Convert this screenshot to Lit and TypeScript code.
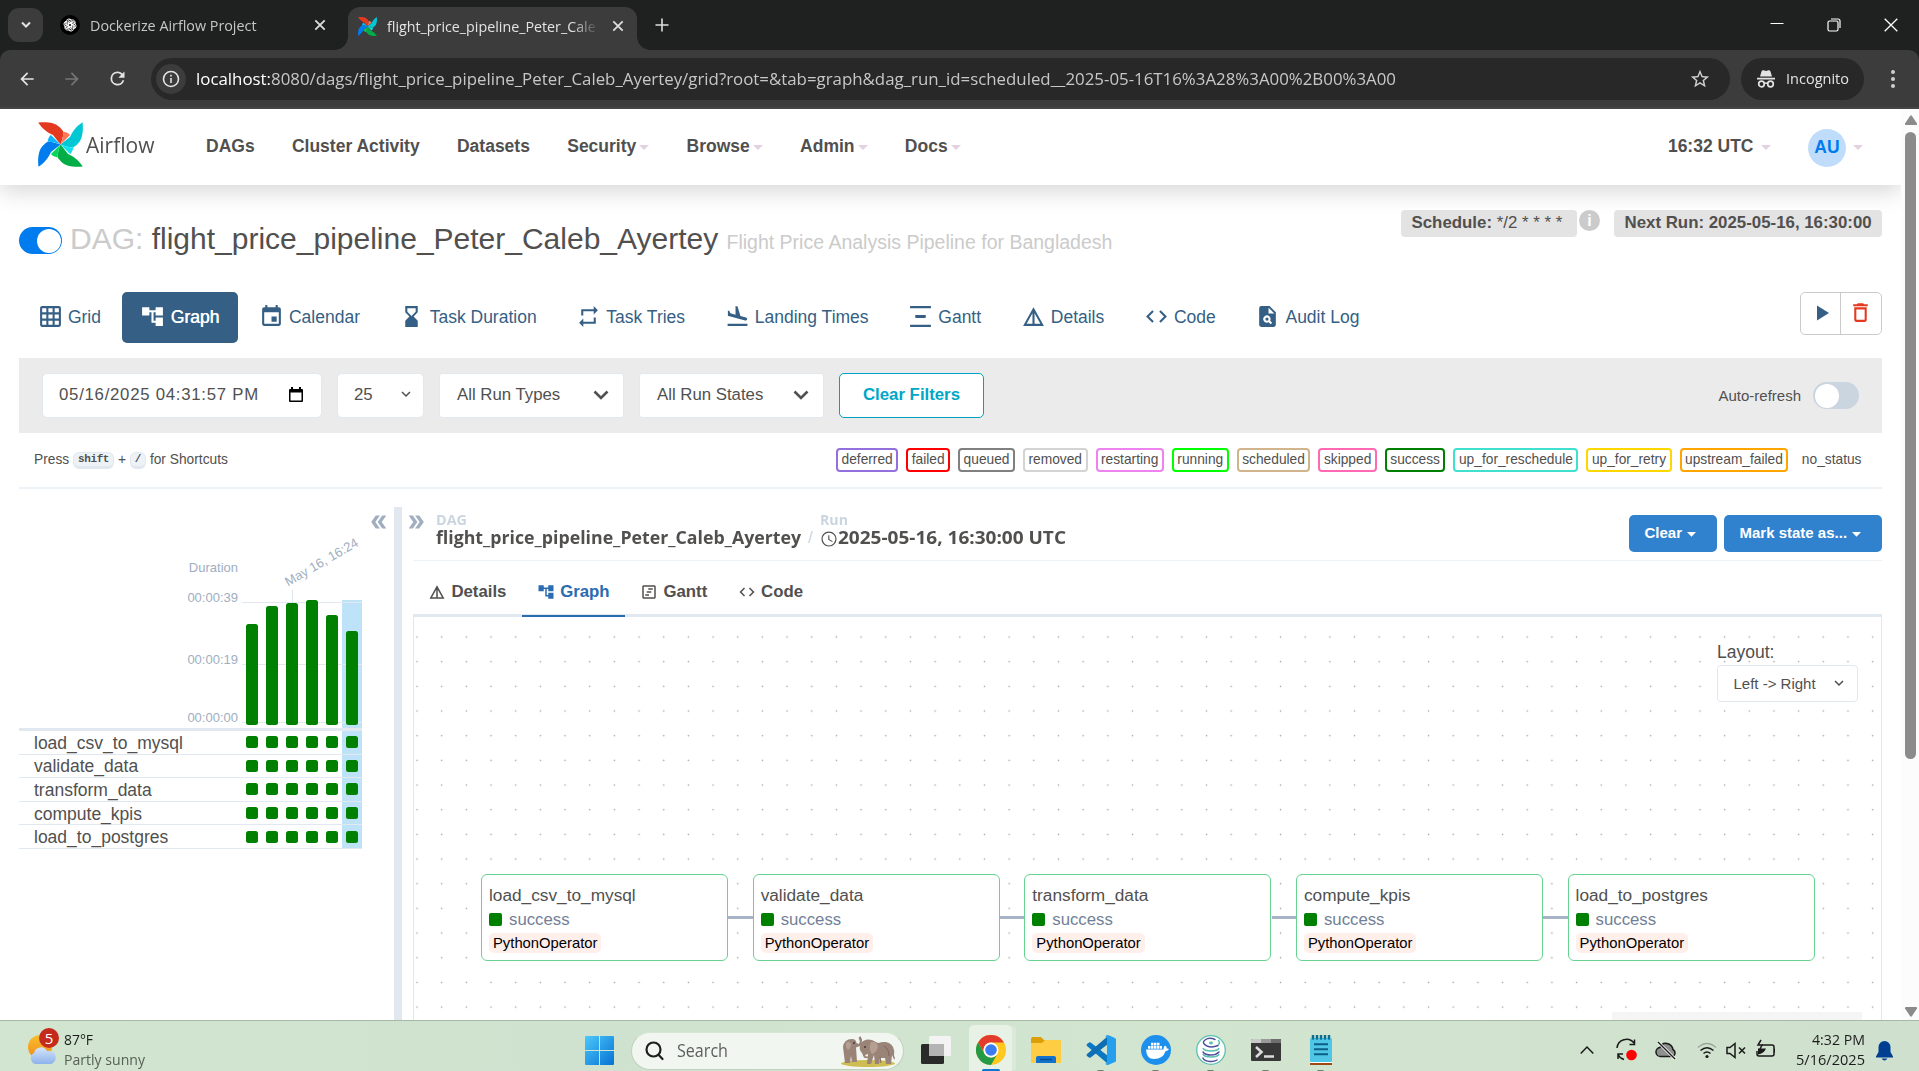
import { LitElement, html, css, svg, nothing } from "lit";
import { customElement, property } from "lit/decorators.js";

const P = {
  grid: "M20 2H4c-1.1 0-2 .9-2 2v16c0 1.1.9 2 2 2h16c1.1 0 2-.9 2-2V4c0-1.1-.9-2-2-2zM8 20H4v-4h4v4zm0-6H4v-4h4v4zm0-6H4V4h4v4zm6 12h-4v-4h4v4zm0-6h-4v-4h4v4zm0-6h-4V4h4v4zm6 12h-4v-4h4v4zm0-6h-4v-4h4v4zm0-6h-4V4h4v4z",
  tree: "M22 11V3h-7v3H9V3H2v8h7V8h2v10h4v3h7v-8h-7v3h-2V8h2v3z",
  event: "M17 12h-5v5h5v-5zM16 1v2H8V1H6v2H5c-1.11 0-1.99.9-1.99 2L3 19c0 1.1.89 2 2 2h14c1.1 0 2-.9 2-2V5c0-1.1-.9-2-2-2h-1V1h-2zm3 18H5V8h14v11z",
  hourglass: "M18 22l-.01-6L14 12l3.99-4.01L18 2H6v6l4 4-4 3.99V22h12zM8 7.5V4h8v3.5l-4 4-4-4z",
  repeat: "M7 7h10v3l4-4-4-4v3H5v6h2V7zm10 10H7v-3l-4 4 4 4v-3h12v-6h-2v4z",
  landing: "M2.5 19h19v2h-19zm7.18-5.73l4.35 1.16 5.31 1.42c.8.21 1.62-.26 1.84-1.06.21-.8-.26-1.62-1.06-1.84l-5.31-1.42-2.76-9.02L10.12 2v8.28L5.15 8.95l-.93-2.32-1.45-.39v5.17l1.6.43 5.31 1.43z",
  gantt: "M22 2v2H2V2h20zM7 10.5v3h10v-3H7zM2 20v2h20v-2H2z",
  details: "M12 3L2 21h20L12 3zm1 5.92L18.6 19H13V8.92zm-2 0V19H5.4L11 8.92z",
  code: "M9.4 16.6L4.8 12l4.6-4.6L8 6l-6 6 6 6 1.4-1.4zm5.2 0l4.6-4.6-4.6-4.6L16 6l6 6-6 6-1.4-1.4z",
  audit: "M14 2H6a2 2 0 0 0-2 2v16a2 2 0 0 0 2 2h12a2 2 0 0 0 2-2V8zm1.04 17.45-1.88-1.88c-1.33.71-3.01.53-4.13-.59a3.495 3.495 0 0 1 0-4.95 3.495 3.495 0 0 1 4.95 0c1.12 1.12 1.31 2.8.59 4.13l1.88 1.88zM13 9V3.5L18.5 9zM11.5 13a1.5 1.5 0 1 0 0 3a1.5 1.5 0 1 0 0-3z",
  trash: "M6 19c0 1.1.9 2 2 2h8c1.1 0 2-.9 2-2V7H6v12zM8 9h8v10H8V9zm7.5-5l-1-1h-5l-1 1H5v2h14V4h-3.5z",
  play: "M7 4.5v15l12-7.5z",
  dbl: "M15.5 5H11l5 7-5 7h4.5l5-7zM8.500 5H4l5 7-5 7h4.500l5-7z",
  ganttBox: "M19 3H5c-1.1 0-2 .9-2 2v14c0 1.1.9 2 2 2h14c1.1 0 2-.9 2-2V5c0-1.1-.9-2-2-2zm0 16H5V5h14v14zM11 7h6v2h-6zM9 11h6v2H9zM7 15h5v2H7z",
  clock: "M11.99 2C6.47 2 2 6.48 2 12s4.470 10 9.990 10C17.520 22 22 17.520 22 12S17.520 2 11.990 2zM12 20.500a8.500 8.500 0 1 1 0-17a8.500 8.500 0 0 1 0 17zM12.500 7H11v6l5.200 3.100.750-1.230-4.450-2.640z",
  star: "M22 9.24l-7.190-.620L12 2 9.190 8.630 2 9.240l5.460 4.730L5.820 21 12 17.270 18.180 21l-1.630-7.030L22 9.240zM12 15.400l-3.760 2.270 1-4.280-3.320-2.880 4.380-.380L12 6.100l1.710 4.040 4.380.380-3.320 2.880 1 4.280L12 15.400z",
  back: "M20 11H7.830l5.590-5.590L12 4l-8 8 8 8 1.410-1.410L7.830 13H20v-2z",
  fwd: "M12 4l-1.410 1.410L16.170 11H4v2h12.170l-5.580 5.590L12 20l8-8z",
  reload: "M17.650 6.350A7.958 7.958 0 0 0 12 4a8 8 0 1 0 7.730 10h-2.080A6 6 0 1 1 12 6c1.660 0 3.140.690 4.220 1.780L13 11h7V4l-2.350 2.350z",
};

const icon = (d: string, size: number, cls = "") => html`<svg class="ic ${cls}" width=${size} height=${size} viewBox="0 0 24 24" fill="currentColor"><path fill-rule="evenodd" d=${d}></path></svg>`;

const pinwheel = (size: number) => {
  const blades = [
    [0, "#e43921", "#ff7557"],
    [90, "#00c7d4", "#11e1ee"],
    [180, "#00ad46", "#04d659"],
    [270, "#017cee", "#0cb6ff"],
  ];
  return html`<svg class="ic" width=${size} height=${size} viewBox="0 0 45 45">
    ${blades.map(([a, dark, light]) => svg`<g transform="rotate(${a} 22.5 22.5)">
      <path fill=${dark} d="M.2.4C9-.4 17 .5 21.500 5C23.500 7 25 8.500 25.300 10C25.600 14 24 18 22.500 22.500L15 13C9.500 10.500 4.500 7 .2.4z"></path>
      <path fill=${light} d="M25.300 9.500C28.500 10.200 31.500 11.500 32 13L22.500 22.500C24.500 17.500 25.500 13.500 25.300 9.500z"></path></g>`)}
  </svg>`;
};

/** One line of text stretched or condensed horizontally to a given width. */
@customElement("fit-text")
export class FitText extends LitElement {
  @property({ type: Number }) w = 0;
  static styles = css`
    :host { display: inline-block; white-space: nowrap; flex: none; }
    .t { display: inline-block; transform-origin: 0 50%; }
  `;
  firstUpdated() {
    const t = this.renderRoot.querySelector<HTMLElement>(".t")!;
    const natural = t.offsetWidth || this.w;
    t.style.transform = `scaleX(${this.w / t.getBoundingClientRect().width || 1})`;
    this.style.width = `${this.w}px`;
    t.style.marginRight = `${this.w - natural}px`;
  }
  render() {
    return html`<span class="t"><slot></slot></span>`;
  }
}

@customElement("browser-chrome")
export class BrowserChrome extends LitElement {
  static styles = css`
    :host { display: block; height: 109px; background: #1f2120; color: #e3e3e3; font: 15px/20px "Open Sans", sans-serif; }
    .ic { display: block; flex: none; }
    .strip { height: 50px; display: flex; align-items: center; }
    .search { width: 35px; height: 34px; margin-left: 8px; border-radius: 11px; background: #3c3c3c; display: grid; place-items: center; }
    .tab { display: flex; align-items: center; }
    .idle { margin-left: 17px; width: 288px; color: #c7c7c7; }
    .idle fit-text { margin-left: 10px; }
    .idle .x { margin-left: 56px; }
    .active { position: relative; align-self: flex-end; height: 43px; width: 289px; background: #3c3c3c; border-radius: 12px 12px 0 0; }
    .active::before, .active::after { content: ""; position: absolute; bottom: 0; width: 13px; height: 13px; }
    .active::before { left: -13px; background: radial-gradient(circle at 0 0, transparent 12.5px, #3c3c3c 13px); }
    .active::after { right: -13px; background: radial-gradient(circle at 100% 0, transparent 12.5px, #3c3c3c 13px); }
    .active .ic:first-child { margin: -4px 0 0 9.500px; }
    .active .clip, .active .x { margin-top: -5px; }
    .clip { width: 210px; margin-left: 10.500px; overflow: hidden; white-space: nowrap; mask-image: linear-gradient(90deg, #000 88%, transparent 101%); }
    .active .x { margin-left: 13.500px; }
    .plus { margin-left: 18px; }
    .win { margin-left: auto; display: flex; align-items: center; gap: 43px; margin-right: 21px; }
    .bar { height: 59px; background: #3c3c3c; border-radius: 10px 10px 0 0; display: flex; align-items: center; box-sizing: border-box; border-bottom: 2px solid #474445; }
    .bar > .b1 { margin-left: 17px; } .bar > .b2 { margin-left: 25px; color: #757575; } .bar > .b3 { margin-left: 25px; }
    .omni { margin-left: 23px; width: 1579px; height: 42px; border-radius: 21px; background: #282828; display: flex; align-items: center; box-sizing: border-box; padding: 0 19px 0 5px; font-size: 17px; color: #c7c7c7; }
    .info { width: 30px; height: 30px; border-radius: 50%; background: #3c3c3c; display: grid; place-items: center; }
    .url { margin-left: 10px; }
    .url b { font-weight: 400; color: #fff; }
    .omni > .ic { margin-left: auto; color: #d0d0d0; }
    .inc { margin-left: 11px; width: 123px; height: 42px; border-radius: 21px; background: #282828; display: flex; align-items: center; box-sizing: border-box; padding-left: 15px; gap: 9.500px; }
    .inc fit-text { margin-top: -1px; }
    .dots { margin-left: 26.500px; }
  `;
  private x(c: string) {
    return html`<svg class="ic ${c}" width="14" height="14" viewBox="0 0 14 14" stroke="#dedede" stroke-width="1.800" fill="none"><path d="M2.300 2.300l9.400 9.400M11.700 2.300l-9.400 9.400"></path></svg>`;
  }
  render() {
    return html`
      <div class="strip">
        <div class="search"><svg width="12" height="8" viewBox="0 0 12 8" fill="none" stroke="#e3e3e3" stroke-width="2"><path d="M2 1.500l4 4 4-4"></path></svg></div>
        <div class="tab idle">
          <svg class="ic" width="20" height="20" viewBox="0 0 20 20"><circle cx="10" cy="10" r="10" fill="#000"></circle>
            <g fill="none" stroke="#fff" stroke-width=".9">${[0, 60, 120, 180, 240, 300].map((a) => svg`<path transform="rotate(${a} 10 10)" d="M8 11.200V6.800a2.300 2.300 0 0 1 3.800-1.700L8.600 7v4.200M11.800 5.100a2.400 2.400 0 0 1 3.200 2.800"></path>`)}</g></svg>
          <fit-text w="166.500">Dockerize Airflow Project</fit-text>${this.x("x")}
        </div>
        <div class="tab active">${pinwheel(19)}<div class="clip"><fit-text w="274">flight_price_pipeline_Peter_Caleb_Ayertey</fit-text></div>${this.x("x")}</div>
        <svg class="ic plus" width="14" height="14" viewBox="0 0 14 14" stroke="#dedede" stroke-width="1.600"><path d="M7 .5v13M.5 7h13"></path></svg>
        <div class="win">
          <svg class="ic" width="14" height="14" viewBox="0 0 14 14" stroke="#fff"><path d="M.5 5.500h13"></path></svg>
          <svg class="ic" width="14" height="14" viewBox="0 0 14 14" stroke="#fff" fill="none" stroke-width="1.200"><rect x="1" y="3" width="10" height="10" rx="1.500"></rect><path d="M4 1h7a2 2 0 0 1 2 2v7"></path></svg>
          <svg class="ic" width="14" height="14" viewBox="0 0 14 14" stroke="#fff" stroke-width="1.300"><path d="M.7.7l12.600 12.600M13.300.7L.7 13.300"></path></svg>
        </div>
      </div>
      <div class="bar">
        ${icon(P.back, 20, "b1")}${icon(P.fwd, 20, "b2")}${icon(P.reload, 21, "b3")}
        <div class="omni">
          <div class="info"><svg class="ic" width="18" height="18" viewBox="0 0 18 18" fill="none" stroke="#e3e3e3" stroke-width="1.600"><circle cx="9" cy="9" r="7.500"></circle><path d="M9 8v5M9 4.800v1.700"></path></svg></div>
          <fit-text class="url" w="1200"><b>localhost:</b>8080/dags/flight_price_pipeline_Peter_Caleb_Ayertey/grid?root=&amp;tab=graph&amp;dag_run_id=scheduled__2025-05-16T16%3A28%3A00%2B00%3A00</fit-text>
          ${icon(P.star, 22)}
        </div>
        <div class="inc">
          <svg class="ic" width="20" height="20" viewBox="0 0 20 20" fill="#e3e3e3"><path d="M5.500 2.500Q6 1 7.500 1.300L10 2l2.500-.7Q14 1 14.500 2.500L16 7.500H4zM1 8.700h18v1.700H1z"></path><g fill="none" stroke="#e3e3e3" stroke-width="1.700"><circle cx="5.500" cy="15" r="2.800"></circle><circle cx="14.500" cy="15" r="2.800"></circle><path d="M8 14.500q2-1 4 0"></path></g></svg>
          <fit-text w="63">Incognito</fit-text>
        </div>
        <svg class="ic dots" width="4" height="18" viewBox="0 0 4 18" fill="#d0d0d0"><circle cx="2" cy="2" r="2"></circle><circle cx="2" cy="9" r="2"></circle><circle cx="2" cy="16" r="2"></circle></svg>
      </div>`;
  }
}

const TASKS = ["load_csv_to_mysql", "validate_data", "transform_data", "compute_kpis", "load_to_postgres"];
const BAR_TOPS = [117, 99, 96, 93, 108, 124];

@customElement("grid-panel")
export class GridPanel extends LitElement {
  static styles = css`
    :host { display: flex; width: 375px; flex: none; align-items: flex-start; font-family: "Liberation Sans", Arial, sans-serif; color: #51504f; }
    .area { width: 343px; }
    .head { display: block; border-bottom: 3px solid #e2e8f0; }
    .head text { font-size: 13px; fill: #a0aec0; }
    .row { display: flex; height: 23.600px; box-sizing: border-box; border-bottom: 1px solid #e2e8f0; align-items: center; font-size: 17.500px; line-height: 22px; }
    .name { width: 223px; padding: 1px 0 0 15px; box-sizing: border-box; }
    .cell { width: 20px; height: 100%; display: grid; place-items: center; }
    .cell:last-child { background: #bee3f8; }
    .cell i { width: 12px; height: 12px; border-radius: 2.500px; background: #008000; }
    .fold { margin: 4px 0 0 6px; color: #a0aec0; transform: scaleX(-1); display: block; }
  `;
  render() {
    return html`<div class="area">
        <svg class="head" width="343" height="221" viewBox="0 0 343 221">
          <rect x="323" y="93" width="20" height="128" fill="#bee3f8"></rect>
          <g fill="#e2e8f0"><rect x="223" y="95" width="120" height="1"></rect><rect x="223" y="157" width="120" height="1"></rect><rect x="223" y="215" width="120" height="1"></rect><rect x="273" y="83" width="1" height="13"></rect></g>
          ${BAR_TOPS.map((y, i) => svg`<rect x=${227 + i * 20} y=${y} width="12" height=${218 - y} rx="2.500" fill="#008000"></rect>`)}
          <text x="219" y="64.500" text-anchor="end">Duration</text>
          <text x="219" y="94.500" text-anchor="end">00:00:39</text>
          <text x="219" y="156.500" text-anchor="end">00:00:19</text>
          <text x="219" y="214.500" text-anchor="end">00:00:00</text>
          <text transform="translate(269 79.500) rotate(-30)">May 16, 16:24</text>
        </svg>
        ${TASKS.map((t) => html`<div class="row"><span class="name">${t}</span>${BAR_TOPS.map(() => html`<span class="cell"><i></i></span>`)}</div>`)}
      </div>
      ${icon(P.dbl, 22, "fold")}`;
  }
}

@customElement("graph-panel")
export class GraphPanel extends LitElement {
  static styles = css`
    :host { display: flex; flex-direction: column; flex: 1; min-width: 0; font-family: "Liberation Sans", Arial, sans-serif; color: #51504f; }
    .ic { display: block; flex: none; }
    .crumbs { display: flex; height: 53px; padding-left: 3px; }
    .open { color: #a0aec0; margin-top: 4px; }
    .crumb { font: 700 17px/18px "Open Sans", sans-serif; }
    .crumb small { display: block; font-size: 14px; line-height: 18px; color: #cbd5e0; margin-top: 4px; height: 18px; }
    .c1 { margin-left: 8.500px; width: 365px; }
    .slash { color: #cbd5e0; margin: 21px 7px 0 7.500px; font: 17px/20px "Liberation Sans", sans-serif; width: 5px; }
    .val { display: flex; align-items: center; height: 18px; }
    .val .ic { margin-top: 2px; }
    .btns { margin-left: auto; display: flex; gap: 7px; margin-top: 8px; height: 37px; }
    .btn { box-sizing: border-box; height: 37px; border-radius: 5px; background: #3182ce; color: #fff; font: 700 15px/36px "Liberation Sans", sans-serif; padding-left: 15.500px; display: flex; align-items: center; gap: 5px; padding-bottom: 1px; }
    .btn svg { margin-top: 3px; }
    .clear { width: 88px; } .mark { width: 158px; }
    .inner { border-top: 1px solid #edf2f7; margin-left: 11px; flex: 1; display: flex; flex-direction: column; }
    .tabs { display: flex; height: 56px; border-bottom: 3px solid #e2e8f0; font: 700 16.800px/20px "Liberation Sans", sans-serif; box-sizing: border-box; }
    .tab { display: flex; align-items: center; gap: 5px; padding: 5px 15.400px 0; height: 56px; box-sizing: border-box; }
    .tab.on { color: #2b6cb0; border-bottom: 2px solid #2b6cb0; padding-top: 7px; }
    .canvas { position: relative; flex: 1; border: solid #e2e8f0; border-width: 0 1px; overflow: hidden;
      background-image: radial-gradient(circle at 1.500px 1.500px, #a3a3a3 .6px, transparent 1.100px); background-size: 24.680px 24.680px; background-position: 1.500px 18.500px; }
    .lay { position: absolute; right: 23px; top: 25px; width: 141px; font-size: 17.500px; line-height: 21px; }
    .sel { margin-top: 2px; height: 37px; box-sizing: border-box; border: 1px solid #e2e8f0; border-radius: 4px; background: #fff; font-size: 15px; display: flex; align-items: center; padding: 0 13px 0 15.500px; justify-content: space-between; }
    .node { position: absolute; top: 257px; width: 247px; height: 87px; box-sizing: border-box; border: 1px solid #68d391; border-radius: 6px; background: #fff; padding: 10px 0 0 7px; }
    .title { font-size: 17.250px; line-height: 21px; }
    .state { display: flex; align-items: center; gap: 7px; color: #718096; font-size: 16.750px; line-height: 20px; margin-top: 4px; }
    .state i { width: 13px; height: 13px; border-radius: 2px; background: #008000; margin-top: -1px; }
    .op { display: inline-block; margin-top: 3px; background: #ffefeb; border-radius: 5px; padding: 0 4px; font-size: 14.800px; line-height: 20px; color: #000; }
    .edge { position: absolute; top: 299px; height: 3px; width: 25px; background: #a8b4c6; }
    .attr { position: absolute; right: 19px; bottom: 0; width: 250px; height: 8px; background: #f5f5f6; }
  `;
  render() {
    const caret = html`<svg class="ic" width="9" height="5" viewBox="0 0 9 5" fill="#fff"><path d="M0 0h9L4.500 4.800z"></path></svg>`;
    return html`
      <div class="crumbs">
        ${icon(P.dbl, 22, "open")}
        <div class="crumb c1"><small><fit-text w="31">DAG</fit-text></small><fit-text w="365">flight_price_pipeline_Peter_Caleb_Ayertey</fit-text></div>
        <span class="slash">/</span>
        <div class="crumb"><small><fit-text w="28">Run</fit-text></small><div class="val">${icon(P.clock, 18)}<fit-text w="228">2025-05-16, 16:30:00 UTC</fit-text></div></div>
        <div class="btns"><div class="btn clear">Clear ${caret}</div><div class="btn mark">Mark state as... ${caret}</div></div>
      </div>
      <div class="inner">
        <div class="tabs">
          <div class="tab">${icon(P.details, 18)}Details</div>
          <div class="tab on">${icon(P.tree, 18)}Graph</div>
          <div class="tab">${icon(P.ganttBox, 18)}Gantt</div>
          <div class="tab">${icon(P.code, 18)}Code</div>
        </div>
        <div class="canvas">
          ${TASKS.map((t, i) => html`${i ? html`<div class="edge" style="left:${42.5 + 271.7 * i}px"></div>` : nothing}
            <div class="node" style="left:${67 + 271.65 * i}px"><div class="title">${t}</div><div class="state"><i></i>success</div><span class="op">PythonOperator</span></div>`)}
          <div class="lay">Layout:<div class="sel">Left -&gt; Right<svg width="10" height="7" viewBox="0 0 10 7" fill="none" stroke="#51504f" stroke-width="1.500"><path d="M1 1l4 4 4-4"></path></svg></div></div>
          <div class="attr"></div>
        </div>
      </div>`;
  }
}

const LEGEND = [
  ["deferred", "mediumpurple"], ["failed", "red"], ["queued", "gray"], ["removed", "lightgrey"], ["restarting", "violet"], ["running", "lime"],
  ["scheduled", "tan"], ["skipped", "hotpink"], ["success", "green"], ["up_for_reschedule", "turquoise"], ["up_for_retry", "gold"],
  ["upstream_failed", "orange"], ["no_status", "transparent"],
];

@customElement("airflow-page")
export class AirflowPage extends LitElement {
  static styles = css`
    :host { display: flex; height: 911px; background: #fff; font: 17.500px/22px "Liberation Sans", Arial, sans-serif; color: #51504f; overflow: hidden; }
    .ic { display: block; flex: none; }
    .page { width: 1901px; display: flex; flex-direction: column; }
    .nav { height: 76px; flex: none; display: flex; align-items: center; font-weight: 700; box-shadow: 0 6px 22px rgba(0,0,0,.17); padding: 0 38px; }
    .nav > .ic { margin-top: -6px; margin-right: 3px; }
    .brand { font: 22px/30px "Open Sans", sans-serif; margin-right: 51.500px; margin-top: -6px; }
    .links { display: flex; gap: 37.300px; margin-top: -3px; }
    .drop { display: flex; align-items: center; gap: 3px; }
    .drop i, .caret { width: 0; border: 5px solid transparent; border-top-color: #e2d2e2; border-bottom: 0; margin-top: 3px; }
    .utc { margin-left: auto; display: flex; align-items: center; gap: 7.500px; margin-top: -3px; }
    .au { width: 38px; height: 38px; border-radius: 50%; background: #bfddfb; color: #017cee; display: grid; place-items: center; margin: 1px 7px 0 37px; padding-bottom: 1px; box-sizing: border-box; }
    .au + .caret { margin-top: 0; }
    .body { flex: 1; padding: 25px 19px 0; display: flex; flex-direction: column; }
    .top { display: flex; height: 82px; flex: none; align-items: flex-start; }
    .on { width: 43px; height: 27px; box-sizing: border-box; border-radius: 14px; background: #017cee; margin: 17px 8px 0 0; padding: 1.500px; display: flex; justify-content: flex-end; }
    .on i { width: 24px; height: 24px; border-radius: 50%; background: #fff; }
    .h { font-size: 30px; line-height: 57px; white-space: nowrap; }
    .mute { color: #cbcbcb; } .sub { font-size: 19.500px; color: #cbcbcb; }
    .tag { height: 27px; background: #e3e3e3; border-radius: 4px; font: 700 16.850px/26px "Liberation Sans", sans-serif; box-sizing: border-box; padding: 0 10.500px; white-space: nowrap; }
    .tag span { font-weight: 400; }
    .t1 { margin-left: auto; width: 176px; } .t2 { width: 268px; margin-left: 14px; }
    .i { width: 21px; height: 21px; border-radius: 50%; background: #cbcbcb; color: #fff; font: 700 16px/21px "Liberation Sans", sans-serif; text-align: center; margin-left: 2px; }
    .views { display: flex; gap: 2.050px; height: 66px; flex: none; color: #355f84; }
    .v { height: 51px; display: flex; align-items: center; gap: 5.200px; padding: 0 18.720px; border-radius: 5px; }
    .v .ic { margin-top: -2.500px; }
    .v span { margin-top: -2px; }
    .v.sel { background: #355f84; color: #fff; text-shadow: .4px 0 #fff; }
    .acts { margin-left: auto; height: 43px; width: 82px; box-sizing: border-box; border: 1px solid #cbcbcb; border-radius: 5px; display: grid; grid-template-columns: 39px 1fr; }
    .acts span { display: grid; place-items: center; padding: 0 0 2px 3px; }
    .acts span + span { border-left: 1px solid #cbcbcb; color: #e43921; padding: 0 1px 3px 0; }
    .filters { height: 75px; flex: none; background: #ebebeb; display: flex; align-items: center; box-sizing: border-box; padding: 0 23px 0 23px; font-size: 16.800px; }
    .f { height: 45px; background: #fff; border: 1px solid #e2e8f0; border-radius: 5px; box-sizing: border-box; display: flex; align-items: center; justify-content: space-between; margin-right: 15px; padding: 0 14px 2px 17px; }
    .date { width: 280px; padding: 0 18.500px 2px 16px; letter-spacing: .730px; }
    .n { width: 87px; padding: 0 12.500px 2px 16px; } .s { width: 185px; border-radius: 3px; }
    .clr { width: 145px; border-color: #00a2c2; color: #00a7c7; font-weight: 700; justify-content: center; margin: 0; padding: 0 0 2px; }
    .auto { margin-left: auto; font-size: 15px; }
    .sw { width: 46px; height: 27px; border-radius: 14px; background: #cbd5e0; box-sizing: border-box; padding: 1.500px; margin-left: 12px; }
    .sw i { display: block; width: 24px; height: 24px; border-radius: 50%; background: #fff; }
    .keys { height: 56px; flex: none; box-sizing: border-box; border-bottom: 2px solid #edf2f7; display: flex; align-items: center; font-size: 13.750px; padding: 0 15px; gap: 3.700px; }
    kbd { background: #edf2f7; border: 1px solid #e2e8f0; border-bottom-width: 3px; border-radius: 6px; font: 700 11px/12px "Liberation Mono", monospace; height: 17px; box-sizing: border-box; padding: 0 4.200px; letter-spacing: -.4px; margin-top: 0; }
    .legend { margin-left: auto; display: flex; gap: 8px; }
    .legend span { height: 24px; box-sizing: border-box; border: 2px solid; border-radius: 4px; padding: 0 3.500px; line-height: 19px; font-size: 13.750px; }
    .main { flex: 1; display: flex; margin-top: 18px; min-height: 0; }
    .split { width: 8px; background: #e2e8f0; flex: none; }
    .scroll { width: 18px; background: #fcfcfc; display: flex; flex-direction: column; align-items: center; padding: 6px 0 3px 1px; box-sizing: border-box; }
    .thumb { width: 11px; height: 627px; border-radius: 6px; background: #8b8b8b; margin: 7px 0 auto; }
  `;
  private drop(t: string) {
    return html`<span class="drop">${t}<i></i></span>`;
  }
  private chev() {
    return html`<svg width="16" height="10" viewBox="0 0 16 10" fill="none" stroke="#51504f" stroke-width="2.600"><path d="M1.500 1.500L8 8l6.500-6.500"></path></svg>`;
  }
  render() {
    return html`<div class="page">
        <div class="nav">${pinwheel(45)}<fit-text class="brand" w="68.500">Airflow</fit-text>
          <div class="links"><span>DAGs</span><span>Cluster Activity</span><span>Datasets</span>${["Security", "Browse", "Admin", "Docs"].map((t) => this.drop(t))}</div>
          <div class="utc">16:32 UTC<i class="caret"></i></div><div class="au">AU</div><i class="caret"></i>
        </div>
        <div class="body">
          <div class="top">
            <div class="on"><i></i></div>
            <div class="h"><span class="mute">DAG:</span> flight_price_pipeline_Peter_Caleb_Ayertey <span class="sub">Flight Price Analysis Pipeline for Bangladesh</span></div>
            <div class="tag t1">Schedule: <span>*/2 * * * *</span></div><div class="i">i</div><div class="tag t2">Next Run: 2025-05-16, 16:30:00</div>
          </div>
          <div class="views">
            ${[["grid", "Grid"], ["tree", "Graph"], ["event", "Calendar"], ["hourglass", "Task Duration"], ["repeat", "Task Tries"], ["landing", "Landing Times"], ["gantt", "Gantt"], ["details", "Details"], ["code", "Code"], ["audit", "Audit Log"]].map(
              ([k, t]) => html`<div class="v ${t === "Graph" ? "sel" : ""}">${icon(P[k as keyof typeof P], 25)}<span>${t}</span></div>`)}
            <div class="acts"><span>${icon(P.play, 24)}</span><span>${icon(P.trash, 25)}</span></div>
          </div>
          <div class="filters">
            <div class="f date">05/16/2025 04:31:57 PM<svg width="14" height="15" viewBox="0 0 14 15"><path fill="#000" fill-rule="evenodd" d="M2 0h2v2h6V0h2v2h1a1 1 0 0 1 1 1v11a1 1 0 0 1-1 1H1a1 1 0 0 1-1-1V3a1 1 0 0 1 1-1h1zM1.500 5.500v8h11v-8z"></path></svg></div>
            <div class="f n">25<svg width="10" height="7" viewBox="0 0 10 7" fill="none" stroke="#51504f" stroke-width="1.500"><path d="M1 1l4 4 4-4"></path></svg></div>
            <div class="f s">All Run Types${this.chev()}</div><div class="f s">All Run States${this.chev()}</div>
            <div class="f clr">Clear Filters</div>
            <span class="auto">Auto-refresh</span><div class="sw"><i></i></div>
          </div>
          <div class="keys"><span>Press</span><kbd>shift</kbd><span>+</span><kbd>/</kbd><span>for Shortcuts</span>
            <div class="legend">${LEGEND.map(([t, c]) => html`<span style="border-color:${c}">${t}</span>`)}</div></div>
          <div class="main"><grid-panel></grid-panel><div class="split"></div><graph-panel></graph-panel></div>
        </div>
      </div>
      <div class="scroll">
        <svg class="ic" width="12" height="10" viewBox="0 0 12 10" fill="#8b8b8b"><path d="M5 1q1-1.300 2 0l5 7.500q.3 1.500-1 1.500H1Q-.3 10 0 8.500z"></path></svg>
        <div class="thumb"></div>
        <svg class="ic" width="12" height="10" viewBox="0 0 12 10" fill="#8b8b8b"><path d="M5 9q1 1.300 2 0l5-7.500Q12.300 0 11 0H1Q-.3 0 0 1.500z"></path></svg>
      </div>`;
  }
}

@customElement("task-bar")
export class TaskBar extends LitElement {
  static styles = css`
    :host { display: flex; align-items: center; height: 51px; box-sizing: border-box; border-top: 1px solid #a8b8a7; background: linear-gradient(90deg, #d2e5d0, #cfe2cf 30%, #d2e5cf 60%, #cfe1ce); font: 15px/20px "Open Sans", sans-serif; color: #1c1c1c; }
    svg { display: block; flex: none; }
    .wx { margin-left: 26px; } .wt { margin-left: 5px; width: 82px; margin-top: 5px; } .wt fit-text { display: block; } .wt .m { color: #575f57; }
    .win { margin-left: 439px; margin-top: 8px; }
    .pill { margin: 9px 0 0 17px; width: 273px; height: 38px; box-sizing: border-box; border-radius: 19px; background: #f1f6f0; border: 1px solid #bfd0bd; border-top-color: #d7e5d5; display: flex; align-items: center; padding: 0 7px 0 13px; font-size: 17.500px; color: #5c5f5c; }
    .pill fit-text { margin: -1px 0 0 13px; } .pill svg:last-child { margin-left: auto; }
    .apps { display: flex; margin-top: 10px; margin-left: 16.500px; gap: 25px; align-items: center; }
    .app { width: 30px; height: 40px; display: flex; flex-direction: column; align-items: center; padding-top: 4px; box-sizing: border-box; }
    .app::after { content: ""; flex: none; width: 7px; height: 3px; border-radius: 2px; background: #718070; margin-top: 5px; }
    .app.no::after { background: none; }
    .app.chrome { width: 43px; height: 46px; margin: -6px -6.500px 0 -6.500px; border-radius: 5px 5px 0 0; background: #e7f1e6; box-shadow: 5px 0 0 -1px #dbe9da; padding-top: 10px; }
    .app.chrome::after { width: 18px; background: #0c78d4; margin-top: 4px; }
    .tray { margin-left: auto; display: flex; align-items: center; margin-right: 26px; margin-top: 8px; }
    .time { display: flex; flex-direction: column; align-items: flex-end; width: 70px; margin: -3px 11px 0 20px; }
    .bell { margin-top: 1px; }
  `;
  render() {
    return html`
      <svg class="wx" width="33" height="40" viewBox="0 0 33 40"><defs><linearGradient id="s" x1="0" y1="0" x2="0" y2="1"><stop offset="0" stop-color="#f9c02d"></stop><stop offset="1" stop-color="#f08a1c"></stop></linearGradient><linearGradient id="c" x1="0" y1="0" x2="0" y2="1"><stop offset="0" stop-color="#d5e5fb"></stop><stop offset="1" stop-color="#8db2ea"></stop></linearGradient></defs>
        <circle cx="14" cy="21" r="12" fill="url(#s)"></circle><path fill="url(#c)" d="M9 38a6 6 0 0 1-1-11 7 7 0 0 1 13-2 6.500 6.500 0 0 1 4 13z"></path><circle cx="23" cy="12" r="10" fill="#c42b1c"></circle><text x="23" y="17.500" font-size="15" text-anchor="middle" fill="#fff" font-family="Open Sans, sans-serif">5</text></svg>
      <div class="wt"><fit-text w="29">87°F</fit-text><fit-text class="m" w="81">Partly sunny</fit-text></div>
      <svg class="win" width="29" height="29" viewBox="0 0 29 29"><defs><linearGradient id="w" x1="0" y1="0" x2="1" y2="1"><stop offset="0" stop-color="#4cc8fc"></stop><stop offset="1" stop-color="#0672d3"></stop></linearGradient></defs><path fill="url(#w)" d="M0 1q0-1 1-1h13v14H0zM15 0h13q1 0 1 1v13H15zM0 15h14v14H1q-1 0-1-1zM15 15h14v13q0 1-1 1H15z"></path></svg>
      <div class="pill">
        <svg width="19" height="20" viewBox="0 0 19 20" fill="none" stroke="#1f1f1f" stroke-width="2.200" stroke-linecap="round"><circle cx="8.500" cy="8.500" r="7"></circle><path d="M13.500 13.800l4 4.200"></path></svg>
        <fit-text w="51">Search</fit-text>
        <svg width="56" height="32" viewBox="0 0 56 32"><ellipse cx="28" cy="28.500" rx="27" ry="3.500" fill="#cdbd52"></ellipse>
          <g fill="#9a8377"><path d="M3 12Q4 4 12 4q4 0 4.500 4l2 1Q21 7 18.500 3l1.700-2Q24 6 20 11l-4 1.500L17 27h-5l-1-6-1 7H5z"></path><path d="M22 18Q18 14 21 8 25 3 32 5l6 3q11-3 15 4 2 4 1 8l1 4-1 .5L52 20l-1 9h-5l-1-6h-5l-1 6h-4l-1-9-3 9h-4l1-10q-2 0-3 1.500 1 1.500 2 .5l1 1.500q-4 2-5-2z"></path></g>
          <path d="M31 7q6-1 7 5-2 6-6 7-4-5-1-12z" fill="#b59f92"></path><path d="M6 8q3-3 5 1 0 4-3 6-3-3-2-7z" fill="#b59f92"></path><path d="M13 8h2M24 12h2" stroke="#473a35" stroke-width="1.500"></path><path d="M44 11q5 3 5 10M40 22l1 6" stroke="#7d675c" fill="none"></path></svg>
      </div>
      <div class="apps">
        <div class="app no"><svg width="30" height="30" viewBox="0 0 30 30"><rect x="0" y="9" width="23" height="20" rx="1.500" fill="#2a2a2a"></rect><rect x="8" y="1" width="22" height="20" rx="1.500" fill="#f3f3f3"></rect><path d="M8 9h15v12H9.500Q8 21 8 19.500z" fill="#b4b4b4"></path></svg></div>
        <div class="app chrome"><svg width="30" height="30" viewBox="0 0 30 30"><circle cx="15" cy="15" r="15" fill="#ffc81f"></circle><path d="M2 7.500A15 15 0 0 1 28 7.500H15a7.500 7.500 0 0 0-6.500 11.250z" fill="#e33b2e"></path><path d="M2 7.500a15 15 0 0 0 13 22.500l6.500-11.250a7.500 7.500 0 0 1-13 0z" fill="#249a46"></path><circle cx="15" cy="15" r="7.500" fill="#fff"></circle><circle cx="15" cy="15" r="5.800" fill="#3b7df0"></circle></svg></div>
        <div class="app no"><svg width="30" height="30" viewBox="0 0 30 30"><path d="M0 4q0-2 2-2h8l3 3h15q2 0 2 2v4H0z" fill="#dd9f08"></path><path d="M0 8h11l3-3h15q1 0 1 1v21q0 1-1 1H1q-1 0-1-1z" fill="#ffcd43"></path><path d="M5 28v-5q0-2 2-2h16q2 0 2 2v5z" fill="#1273ce"></path><path d="M9 24.500h12" stroke="#0a4c90" stroke-width="1.500"></path></svg></div>
        <div class="app"><svg width="30" height="30" viewBox="0 0 30 30"><path d="M1 9l2-1.500q1-.5 2 .3L22 21v8L1 11q-1-1 0-2z" fill="#0a78c2"></path><path d="M1 21l2 1.500q1 .5 2-.3L22 9V1L1 19q-1 1 0 2z" fill="#0e6fb5"></path><path d="M22 0l7 3q1 .5 1 1.500v21q0 1-1 1.500l-7 3q-2 0-3-1.500 2 .5 2-1.500V3q0-2-2-1.500Q20 0 22 0z" fill="#26a0ee"></path></svg></div>
        <div class="app"><svg width="30" height="30" viewBox="0 0 30 30"><circle cx="15" cy="15" r="15" fill="#1d8fed"></circle><path d="M5 14.500h17.500q0-3 1.500-4 2 1 1.800 3 1.500-.3 2.200.5-1 2-3.500 2.200Q22 24 13 24q-7.500 0-8-9.500z" fill="#fff"></path><path d="M7 11h2.500v2.700H7zM10 11h2.500v2.700H10zM13 11h2.500v2.700H13zM16 11h2.500v2.700H16zM19 11h2v2.700h-2zM10 7.800h2.500v2.700H10zM13 7.800h2.500v2.700H13zM16 7.800h2.500v2.700H16z" fill="#fff"></path></svg></div>
        <div class="app"><svg width="30" height="30" viewBox="0 0 30 30" fill="none"><circle cx="15" cy="15" r="14.300" fill="#fff" stroke="#5bc0b0" stroke-width="1.300"></circle><g stroke="#4f4f9e" stroke-width="1.500" stroke-linecap="round"><path d="M19 4.500Q13 2 9 5t2 6q5 2 11-.5M23 17q-3 3-8 3-6 0-8-3M21 25q-3 2-7 1.500-6-.5-7-3.500"></path></g><g stroke="#5bc0b0" stroke-width="1.500"><path d="M22 5q3 3 0 5M7 13q1 3 8 3t8-3M7 19q1 3 8 3t8-3"></path></g><ellipse cx="15" cy="8" rx="2" ry="1.400" fill="#5bc0b0"></ellipse></svg></div>
        <div class="app"><svg width="30" height="30" viewBox="0 0 30 30"><path d="M0 5q0-1 1-1h28q1 0 1 1v20q0 1-1 1H1q-1 0-1-1z" fill="#383838"></path><path d="M0 5q0-1 1-1h9v4H0z" fill="#c9c9c9"></path><path d="M10 4h10v4H10z" fill="#9a9a9a"></path><path d="M20 4h9q1 0 1 1v3H20z" fill="#6e6e6e"></path><path d="M5 12l5.500 5L5 22M13 21.500h10" stroke="#dcdcdc" stroke-width="2.600" fill="none"></path></svg></div>
        <div class="app"><svg width="30" height="30" viewBox="0 0 30 30"><rect x="4" y="3" width="22" height="24" rx="1.500" fill="#4fc6e6"></rect><path d="M4 27h22v1.300H4z" fill="#fff"></path><path d="M4 28h22v2H4z" fill="#a0480f"></path><path d="M8 9.300h14M8 14.300h14M8 19.300h14" stroke="#0b5f86" stroke-width="2"></path><path d="M7 .5v3M11 .5v3M15 .5v3M19 .5v3M23 .5v3" stroke="#0b6f94" stroke-width="2.500" stroke-linecap="round"></path></svg></div>
      </div>
      <div class="tray">
        <svg width="195" height="24" viewBox="0 0 195 24" fill="none" stroke="#1a1a1a" stroke-width="1.500">
          <path d="M.7 15.500L7 9l6.300 6.500"></path>
          <path d="M37 10a9.500 9.500 0 0 1 17-5M54.500 1.500v5h-5M38 21v-5h5M38 16.500q2 4 6 5"></path><circle cx="51.500" cy="17" r="5.300" fill="#f00" stroke="none"></circle>
          <path d="M81 18.500a4.500 4.500 0 0 1-1-9Q82 4.500 87 5.500t6 6a4 4 0 0 1 0 7z" fill="#8d908d"></path><path d="M78 4l17 17" stroke="#fff" stroke-width="3"></path><path d="M78 4l17 17"></path>
          <path d="M118 9.500q9-8 18 0" stroke="#9ba59a"></path><path d="M120.500 12.500q6.500-5.500 13 0M123.500 15.500q3.500-3 7 0"></path><circle cx="127" cy="18.500" r="1.600" fill="#1a1a1a" stroke="none"></circle>
          <path d="M147 9.500h3l5-4v14l-5-4h-3zM159 9.500l6 6M165 9.500l-6 6"></path>
          <g transform="translate(5 0)"><path d="M182 7h10q2 0 2 2v7q0 2-2 2h-13q-2 0-2-2v-3" transform="translate(-5 0)"></path><path d="M190 10.500v4" stroke-width="2"></path><path d="M173 16.500v-6h8q-2 5-8 6z" fill="#1a1a1a" stroke="none"></path><path d="M176 2l-3 5h4l-2 4"></path></g>
        </svg>
        <div class="time"><fit-text w="53">4:32 PM</fit-text><fit-text w="69">5/16/2025</fit-text></div>
        <svg class="bell" width="17" height="20" viewBox="0 0 17 20" fill="#003e92"><path d="M8.500 0a6 6 0 0 1 6 6v5l2.500 4.500v1H0v-1L2.500 11V6a6 6 0 0 1 6-6zM5.500 17.500h6q-3 4-6 0z"></path></svg>
      </div>`;
  }
}

@customElement("app-root")
export class AppRoot extends LitElement {
  static styles = css`
    :host { display: block; width: 1919px; height: 1071px; overflow: hidden; background: #fff; }
  `;
  render() {
    return html`<browser-chrome></browser-chrome><airflow-page></airflow-page><task-bar></task-bar>`;
  }
}
